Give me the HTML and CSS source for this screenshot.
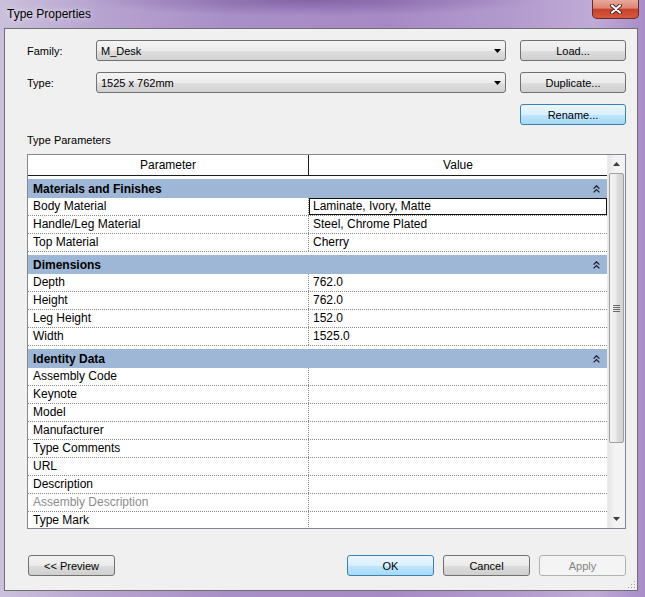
FILE: index.html
```html
<!DOCTYPE html>
<html lang="en">
  <head>
    <meta charset="UTF-8" />
    <title>Type Properties</title>
    <link rel="stylesheet" href="styles.css">
  </head>
  <body>
    <div class="window">
      <div class="titlebar">
        <span class="title">Type Properties</span>
        <button class="close-btn">
          <svg width="12" height="10" viewBox="0 0 12 10">
            <path d="M2 1.5 L10 8.5 M10 1.5 L2 8.5" stroke="#4a2020" stroke-width="4" stroke-linecap="round" fill="none" />
            <path d="M2 1.5 L10 8.5 M10 1.5 L2 8.5" stroke="#ffffff" stroke-width="2.2" stroke-linecap="round" fill="none" />
          </svg>
        </button>
      </div>

      <div class="client">
        <div class="type-select">
          <label class="field-label">Family:</label>
          <div class="combo">
            <span>M_Desk</span>
            <svg width="7" height="4" viewBox="0 0 7 4"><path d="M0 0h7l-3.5 4z" fill="#000" /></svg>
          </div>
          <button class="btn">Load...</button>

          <label class="field-label">Type:</label>
          <div class="combo">
            <span>1525 x 762mm</span>
            <svg width="7" height="4" viewBox="0 0 7 4"><path d="M0 0h7l-3.5 4z" fill="#000" /></svg>
          </div>
          <button class="btn">Duplicate...</button>

          <button class="btn btn-focus rename">Rename...</button>
        </div>

        <div class="section-label">Type Parameters</div>

        <div class="prop-grid">
          <div class="grid-main">
            <div class="grid-head">
              <div class="head-cell name-col">Parameter</div>
              <div class="head-cell">Value</div>
            </div>
            <div class="rows">
              <div class="group">
                <span>Materials and Finishes</span>
                <svg width="7" height="8" viewBox="0 0 7 8"><path d="M0.6 3.6 L3.5 0.8 L6.4 3.6 M0.6 7.4 L3.5 4.6 L6.4 7.4" fill="none" stroke="#1c1c2c" stroke-width="1.3" /></svg>
              </div>
              <div class="row"><div class="name">Body Material</div><div class="value editing">Laminate, Ivory, Matte</div></div>
              <div class="row"><div class="name">Handle/Leg Material</div><div class="value">Steel, Chrome Plated</div></div>
              <div class="row"><div class="name">Top Material</div><div class="value">Cherry</div></div>

              <div class="group">
                <span>Dimensions</span>
                <svg width="7" height="8" viewBox="0 0 7 8"><path d="M0.6 3.6 L3.5 0.8 L6.4 3.6 M0.6 7.4 L3.5 4.6 L6.4 7.4" fill="none" stroke="#1c1c2c" stroke-width="1.3" /></svg>
              </div>
              <div class="row"><div class="name">Depth</div><div class="value">762.0</div></div>
              <div class="row"><div class="name">Height</div><div class="value">762.0</div></div>
              <div class="row"><div class="name">Leg Height</div><div class="value">152.0</div></div>
              <div class="row"><div class="name">Width</div><div class="value">1525.0</div></div>

              <div class="group">
                <span>Identity Data</span>
                <svg width="7" height="8" viewBox="0 0 7 8"><path d="M0.6 3.6 L3.5 0.8 L6.4 3.6 M0.6 7.4 L3.5 4.6 L6.4 7.4" fill="none" stroke="#1c1c2c" stroke-width="1.3" /></svg>
              </div>
              <div class="row"><div class="name">Assembly Code</div><div class="value"></div></div>
              <div class="row"><div class="name">Keynote</div><div class="value"></div></div>
              <div class="row"><div class="name">Model</div><div class="value"></div></div>
              <div class="row"><div class="name">Manufacturer</div><div class="value"></div></div>
              <div class="row"><div class="name">Type Comments</div><div class="value"></div></div>
              <div class="row"><div class="name">URL</div><div class="value"></div></div>
              <div class="row"><div class="name">Description</div><div class="value"></div></div>
              <div class="row"><div class="name readonly">Assembly Description</div><div class="value"></div></div>
              <div class="row"><div class="name">Type Mark</div><div class="value"></div></div>
            </div>
          </div>

          <div class="vscroll">
            <div class="arrow">
              <svg width="7" height="4" viewBox="0 0 7 4"><path d="M0 4h7l-3.5-4z" fill="#3c3c3c" /></svg>
            </div>
            <div class="thumb">
              <svg width="7" height="7" viewBox="0 0 7 7"><path d="M0 0.5h7M0 2.5h7M0 4.5h7M0 6.5h7" stroke="#6a6a6a" stroke-width="1" /></svg>
            </div>
            <div class="track"></div>
            <div class="arrow">
              <svg width="7" height="4" viewBox="0 0 7 4"><path d="M0 0h7l-3.5 4z" fill="#3c3c3c" /></svg>
            </div>
          </div>
        </div>

        <div class="footer">
          <button class="btn preview">&lt;&lt; Preview</button>
          <span class="spacer"></span>
          <button class="btn btn-focus">OK</button>
          <button class="btn">Cancel</button>
          <button class="btn" disabled>Apply</button>
        </div>

        <svg class="grip" width="9" height="9" viewBox="0 0 9 9">
          <path d="M7 1h1v1h-1zM4 4h1v1h-1zM7 4h1v1h-1zM1 7h1v1h-1zM4 7h1v1h-1zM7 7h1v1h-1z" fill="#a0a0a0" />
        </svg>
      </div>
    </div>
  </body>
</html>
```

FILE: styles.css
```css
* {
  box-sizing: border-box;
}
body {
  margin: 0;
  font-family: "Liberation Sans", Arial, sans-serif;
  color: #000;
}
.window {
  width: 645px;
  height: 597px;
  display: flex;
  flex-direction: column;
  background:
    radial-gradient(ellipse 230px 16px at 310px 0px, rgba(95, 60, 135, 0.5), transparent),
    linear-gradient(to right, #cbc1dc 0%, #b8a5d1 14%, #a98fc7 35%, #a68ac5 60%, #b39bce 80%, #bfabd7 92%, #a88cc8 100%);
}
.titlebar {
  height: 28px;
  display: flex;
  align-items: flex-start;
}
.title {
  font-size: 12px;
  line-height: 14px;
  padding: 7px 0 0 7px;
  text-shadow: 0 0 6px rgba(255, 255, 255, 0.9);
}
.close-btn {
  margin-left: auto;
  margin-right: 6px;
  width: 47px;
  height: 19px;
  padding: 0;
  border: 1px solid #6b2a24;
  border-top: none;
  border-radius: 0 0 5px 5px;
  background: linear-gradient(#e8aa9c, #dc8672 45%, #c9412c 52%, #d45a40 100%);
  display: flex;
  align-items: center;
  justify-content: center;
}

.client {
  flex: 1;
  position: relative;
  margin: 0 7px 6px 4px;
  border: 1px solid #6f6f6f;
  background: #f0f0f0;
  padding: 11px 11px 13px 22px;
  display: flex;
  flex-direction: column;
}

.type-select {
  display: grid;
  grid-template-columns: 55px 410px 106px;
  grid-template-rows: 21px 21px 21px;
  column-gap: 14px;
  row-gap: 11px;
  align-items: center;
  font-size: 11px;
}
.field-label {
  font-size: 11px;
}
.combo {
  height: 21px;
  border: 1px solid #707070;
  border-radius: 3px;
  background: linear-gradient(#f4f4f4, #ececec 50%, #dedede 51%, #d2d2d2);
  display: flex;
  align-items: center;
  justify-content: space-between;
  padding: 0 4px 0 4px;
}
.btn {
  height: 21px;
  font-family: "Liberation Sans", Arial, sans-serif;
  font-size: 11px;
  color: #000;
  border: 1px solid #707070;
  border-radius: 3px;
  background: linear-gradient(#f2f2f2, #ebebeb 50%, #dddddd 51%, #cfcfcf);
  padding: 0;
}
.btn-focus {
  border-color: #3c7fb1;
  background: linear-gradient(#eaf6fd, #d9f0fc 50%, #bee6fd 51%, #a7d9f5);
}
.btn:disabled {
  border-color: #adb2b5;
  background: #f4f4f4;
  color: #838383;
}
.rename {
  grid-column: 3;
}

.section-label {
  font-size: 11px;
  line-height: 14px;
  margin: 8px 0 7px;
}

.prop-grid {
  height: 375px;
  border: 1px solid #828790;
  background: #fff;
  display: flex;
}
.grid-main {
  width: 579px;
  display: flex;
  flex-direction: column;
  font-size: 12px;
}
.grid-head {
  display: flex;
  height: 21px;
  border-bottom: 1px solid #1e1e1e;
  background: #fff;
}
.head-cell {
  flex: 1;
  display: flex;
  align-items: center;
  justify-content: center;
}
.head-cell.name-col {
  flex: 0 0 281px;
  border-right: 1px solid #1e1e1e;
}
.rows {
  flex: 1;
  overflow: hidden;
}
.group {
  height: 22px;
  border-top: 3px solid #fff;
  background: #9fb7d7;
  font-weight: bold;
  display: flex;
  align-items: center;
  justify-content: space-between;
  padding: 0 7px 0 5px;
}
.row {
  display: flex;
  height: 18px;
  border-bottom: 1px dotted #8a8a8a;
}
.name {
  flex: 0 0 281px;
  border-right: 1px dotted #8a8a8a;
  padding-left: 5px;
  line-height: 17px;
}
.name.readonly {
  color: #8c8c8c;
}
.value {
  flex: 1;
  padding-left: 4px;
  line-height: 17px;
}
.value.editing {
  box-shadow: inset 0 0 0 1px #111;
}

.vscroll {
  flex: 1;
  display: flex;
  flex-direction: column;
  background: linear-gradient(to right, #e6e6e6, #f3f3f3 40%, #f3f3f3);
  border-left: 1px solid #ececec;
}
.arrow {
  height: 18px;
  display: flex;
  align-items: center;
  justify-content: center;
}
.thumb {
  height: 270px;
  margin: 0 1px 0 1px;
  border: 1px solid #a0a0a0;
  border-radius: 2px;
  background: linear-gradient(to right, #f4f4f4, #ececec 45%, #dcdcdc 55%, #d2d2d2);
  display: flex;
  align-items: center;
  justify-content: center;
}
.track {
  flex: 1;
}

.footer {
  display: flex;
  gap: 9px;
  margin-top: 26px;
}
.footer .btn {
  width: 87px;
}
.footer .preview {
  margin-left: 1px;
}
.spacer {
  flex: 1;
}
.grip {
  position: absolute;
  right: 1px;
  bottom: 1px;
}
```
